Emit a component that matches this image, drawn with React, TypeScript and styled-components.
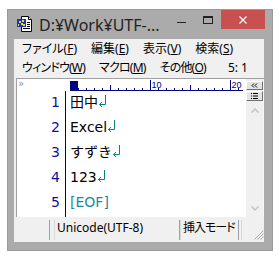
import React from "react";
import styled, { createGlobalStyle } from "styled-components";

const GlobalStyle = createGlobalStyle`
  html, body { margin: 0; padding: 0; background: #ffffff; }
`;

const Page = styled.div`
  padding: 9px 0 0 7px;
`;

const Window = styled.div`
  box-sizing: border-box;
  width: 266px;
  height: 242px;
  background: #ababab;
  border: 1px solid #9a9a9a;
  display: flex;
  flex-direction: column;
`;

const TitleBar = styled.div`
  height: 29px;
  flex-shrink: 0;
  display: flex;
  align-items: flex-start;
  padding-left: 9px;
`;

const AppIcon = styled.svg`
  margin-top: 6px;
  flex-shrink: 0;
`;

const Title = styled.div`
  flex: 1;
  min-width: 0;
  margin: 5px 0 0 6px;
  font-family: "Noto Sans", "Noto Sans CJK JP", sans-serif;
  font-size: 16px;
  line-height: 20px;
  color: #222222;
  white-space: nowrap;
`;

const Captions = styled.div`
  display: flex;
  margin-right: 7px;
`;

const CaptionButton = styled.div<{ $w: number; $close?: boolean }>`
  width: ${(p) => p.$w}px;
  height: 19px;
  display: flex;
  justify-content: center;
  align-items: flex-start;
  background: ${(p) => (p.$close ? "#c75050" : "transparent")};
`;

const MinGlyph = styled.div`
  margin-top: 12px;
  width: 9px;
  height: 1px;
  background: #222222;
`;

const MaxGlyph = styled.div`
  box-sizing: border-box;
  margin-top: 6px;
  width: 10px;
  height: 8px;
  border: 1px solid #222222;
  border-top-width: 2px;
`;

const CloseGlyph = styled.svg`
  margin-top: 6px;
`;

const Client = styled.div`
  flex: 1;
  min-height: 0;
  margin: 0 8px 8px 6px;
  background: #f0f0f0;
  display: flex;
  flex-direction: column;
`;

const MenuBar = styled.div`
  padding: 0 0 1px 1px;
  font-family: "Noto Sans", "Noto Sans CJK JP", sans-serif;
  font-size: 12px;
  color: #000000;
  font-feature-settings: "palt";
`;

const MenuRow = styled.div<{ $ls?: number }>`
  display: flex;
  height: 19px;
  line-height: 19px;
  white-space: nowrap;
  letter-spacing: ${(p) => p.$ls ?? 0}px;
`;

const MenuItem = styled.span<{ $end?: boolean }>`
  padding: 0 7px;
  ${(p) => (p.$end ? "margin-left: auto; padding-right: 16px; letter-spacing: 0;" : "")}
`;

const Key = styled.span`
  text-decoration: underline;
  text-underline-offset: 1px;
`;

const Editor = styled.div`
  flex: 1;
  min-height: 0;
  margin-left: 2px;
  border-top: 1px solid #a0a0a0;
  border-left: 1px solid #a0a0a0;
  background: #ffffff;
  display: flex;
`;

const Main = styled.div`
  flex: 1;
  display: flex;
  flex-direction: column;
`;

const Ruler = styled.div`
  height: 12px;
  display: flex;
  flex-shrink: 0;
`;

const RulerCorner = styled.div`
  width: 53px;
  padding-left: 1px;
  box-sizing: border-box;
  font-family: "DejaVu Sans", sans-serif;
  font-size: 10px;
  line-height: 10px;
  color: #8a8ac4;
`;

const TextArea = styled.div`
  flex: 1;
  display: flex;
  font-family: "DejaVu Sans", "Noto Sans CJK JP", sans-serif;
  font-size: 14px;
  line-height: 22px;
`;

const Gutter = styled.div`
  width: 49px;
  box-sizing: border-box;
  border-right: 1px solid #000080;
  padding-right: 5px;
  text-align: right;
  color: #1010a0;
`;

const Lines = styled.div`
  flex: 1;
  padding-left: 4px;
  color: #000000;
`;

const Row = styled.div<{ $eof?: boolean }>`
  height: 25px;
  white-space: nowrap;
  color: ${(p) => (p.$eof ? "#188c9c" : "inherit")};
`;

const CrMark = styled.svg`
  vertical-align: baseline;
`;

const ScrollBar = styled.div`
  width: 17px;
  border-right: 1px solid #f7f7f7;
  background: #f0f0f0;
  display: flex;
  flex-direction: column;
  align-items: stretch;
`;

const SideButton = styled.div<{ $top: number; $h: number }>`
  box-sizing: border-box;
  margin-top: ${(p) => p.$top}px;
  height: ${(p) => p.$h}px;
  background: #e4e4e4;
  border-top: 1px solid #ffffff;
  border-left: 1px solid #ffffff;
  border-right: 1px solid #6e6e6e;
  border-bottom: 1px solid #6e6e6e;
  display: flex;
  align-items: center;
  justify-content: center;
`;

const Track = styled.div`
  flex: 1;
  display: flex;
  flex-direction: column;
  align-items: center;
  justify-content: space-between;
  padding: 7px 0 6px;
`;

const StatusBar = styled.div`
  height: 25px;
  flex-shrink: 0;
  box-sizing: border-box;
  padding: 3px 0 2px;
  display: flex;
  font-family: "Noto Sans", "Noto Sans CJK JP", sans-serif;
  font-feature-settings: "palt";
  font-size: 12px;
  line-height: 16px;
  color: #000000;
`;

const Pane = styled.div<{ $w?: number; $gap?: number; $first?: boolean; $ls?: number }>`
  box-sizing: border-box;
  ${(p) => (p.$w ? `width: ${p.$w}px;` : "flex: 1;")}
  margin-left: ${(p) => p.$gap ?? 0}px;
  border-left: 1px solid ${(p) => (p.$first ? "transparent" : "#d9d9d9")};
  border-right: 1px solid #a0a0a0;
  padding-left: 2px;
  letter-spacing: ${(p) => p.$ls ?? 0}px;
  white-space: nowrap;
  display: flex;
  align-items: flex-start;
`;

const GripPane = styled(Pane)`
  justify-content: flex-end;
  align-items: flex-end;
  border-right: none;
  padding: 0;
`;

function Ret() {
  return (
    <CrMark width="9" height="12" viewBox="0 0 9 12">
      <polyline points="7.5,0 7.5,9.5 1.5,9.5" fill="none" stroke="#0a8080" strokeWidth="1" />
      <polyline points="4,7 1.5,9.5 4,12" fill="none" stroke="#0a8080" strokeWidth="1" />
    </CrMark>
  );
}

function RulerScale() {
  const ticks = [];
  for (let i = 1; i <= 21; i++) {
    const x = 8 * i;
    if (i % 10 === 0) {
      ticks.push(<rect key={i} x={x} y={1} width={1} height={10} fill="#000080" />);
      ticks.push(
        <text
          key={"t" + i}
          x={x + 1.5}
          y={9}
          fontSize="9"
          fontFamily="Liberation Sans, sans-serif"
          fill="#000080"
        >
          {i}
        </text>
      );
    } else if (i % 5 === 0) {
      ticks.push(<rect key={i} x={x} y={6} width={1} height={5} fill="#000080" />);
    } else {
      ticks.push(<rect key={i} x={x} y={9} width={1} height={2} fill="#000080" />);
    }
  }
  return (
    <svg width="176" height="12" viewBox="0 0 176 12">
      <rect x="0" y="11" width="173" height="1" fill="#000080" />
      <rect x="0" y="2" width="8" height="9" fill="#000080" />
      {ticks}
    </svg>
  );
}

export default function App() {
  return (
    <>
      <GlobalStyle />
      <Page>
        <Window>
          <TitleBar>
            <AppIcon width="16" height="16" viewBox="0 0 16 16">
              <path d="M4.5 0.5 H11.5 L14.5 3.5 V15.5 H4.5 Z" fill="#ffffff" stroke="#000000" />
              <path d="M11.5 0.5 V3.5 H14.5" fill="#e0e0e0" stroke="#000000" />
              <rect x="10" y="6" width="3" height="1" fill="#000" />
              <rect x="10" y="8" width="3" height="1" fill="#000" />
              <rect x="10" y="10" width="3" height="1" fill="#000" />
              <rect x="6" y="12" width="7" height="1" fill="#000" />
              <rect x="0" y="3" width="9" height="8" fill="#1a2fd0" />
              <rect x="2" y="5" width="2" height="2" fill="#f2e020" />
              <rect x="5" y="4" width="2" height="2" fill="#f2e020" />
              <rect x="4" y="7" width="2" height="2" fill="#f2e020" />
              <rect x="1" y="8" width="1" height="2" fill="#f2e020" />
              <rect x="6" y="8" width="2" height="2" fill="#f2e020" />
            </AppIcon>
            <Title>D:¥Work¥UTF-...</Title>
            <Captions>
              <CaptionButton $w={27}>
                <MinGlyph />
              </CaptionButton>
              <CaptionButton $w={26}>
                <MaxGlyph />
              </CaptionButton>
              <CaptionButton $w={44} $close>
                <CloseGlyph width="8" height="8" viewBox="0 0 8 8">
                  <path d="M0.5 0.5 L7.5 7.5 M7.5 0.5 L0.5 7.5" stroke="#ffffff" strokeWidth="1.2" />
                </CloseGlyph>
              </CaptionButton>
            </Captions>
          </TitleBar>
          <Client>
            <MenuBar>
              <MenuRow>
                <MenuItem>ファイル(<Key>F</Key>)</MenuItem>
                <MenuItem>編集(<Key>E</Key>)</MenuItem>
                <MenuItem>表示(<Key>V</Key>)</MenuItem>
                <MenuItem>検索(<Key>S</Key>)</MenuItem>
              </MenuRow>
              <MenuRow $ls={-0.8}>
                <MenuItem>ウィンドウ(<Key>W</Key>)</MenuItem>
                <MenuItem>マクロ(<Key>M</Key>)</MenuItem>
                <MenuItem>その他(<Key>O</Key>)</MenuItem>
                <MenuItem $end>5: 1</MenuItem>
              </MenuRow>
            </MenuBar>
            <Editor>
              <Main>
                <Ruler>
                  <RulerCorner>»</RulerCorner>
                  <RulerScale />
                </Ruler>
                <TextArea>
                  <Gutter>
                    {[1, 2, 3, 4, 5].map((n) => (
                      <Row key={n}>{n}</Row>
                    ))}
                  </Gutter>
                  <Lines>
                    <Row>田中<Ret /></Row>
                    <Row>Excel<Ret /></Row>
                    <Row>すずき<Ret /></Row>
                    <Row>123<Ret /></Row>
                    <Row $eof>[EOF]</Row>
                  </Lines>
                </TextArea>
              </Main>
              <ScrollBar>
                <SideButton $top={2} $h={9}>
                  <svg width="7" height="5" viewBox="0 0 7 5">
                    <path d="M3 0.5 L1 2.5 L3 4.5 M6 0.5 L4 2.5 L6 4.5" fill="none" stroke="#000" strokeWidth="1" />
                  </svg>
                </SideButton>
                <SideButton $top={1} $h={10}>
                  <svg width="7" height="6" viewBox="0 0 7 6">
                    <rect x="0" y="0" width="1" height="1" fill="#000" />
                    <rect x="2" y="0" width="5" height="1" fill="#000" />
                    <rect x="0" y="2.5" width="1" height="1" fill="#000" />
                    <rect x="2" y="2.5" width="5" height="1" fill="#000" />
                    <rect x="0" y="5" width="1" height="1" fill="#000" />
                    <rect x="2" y="5" width="5" height="1" fill="#000" />
                  </svg>
                </SideButton>
                <Track>
                  <svg width="8" height="5" viewBox="0 0 8 5">
                    <path d="M0.5 4.5 L4 1 L7.5 4.5" fill="none" stroke="#c4c4c4" strokeWidth="1.5" />
                  </svg>
                  <svg width="8" height="5" viewBox="0 0 8 5">
                    <path d="M0.5 0.5 L4 4 L7.5 0.5" fill="none" stroke="#c4c4c4" strokeWidth="1.5" />
                  </svg>
                </Track>
              </ScrollBar>
            </Editor>
            <StatusBar>
              <Pane $w={36} $first />
              <Pane $w={126} $gap={4}>Unicode(UTF-8)</Pane>
              <Pane $w={59} $ls={-1}>挿入モード</Pane>
              <GripPane $gap={2}>
                <svg width="11" height="11" viewBox="0 0 11 11">
                  <path d="M10.5 1.5 L1.5 10.5 M10.5 4.5 L4.5 10.5 M10.5 7.5 L7.5 10.5" stroke="#a8a8a8" strokeWidth="1" />
                </svg>
              </GripPane>
            </StatusBar>
          </Client>
        </Window>
      </Page>
    </>
  );
}
